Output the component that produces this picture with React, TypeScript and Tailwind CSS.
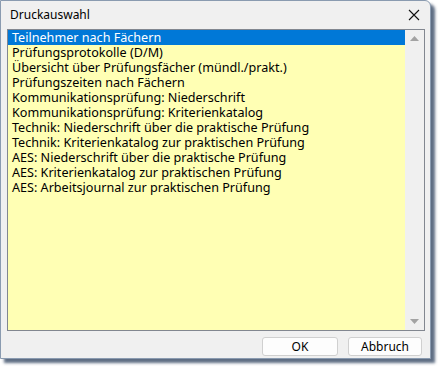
import React from "react";

const items = [
  "Teilnehmer nach Fächern",
  "Prüfungsprotokolle (D/M)",
  "Übersicht über Prüfungsfächer (mündl./prakt.)",
  "Prüfungszeiten nach Fächern",
  "Kommunikationsprüfung: Niederschrift",
  "Kommunikationsprüfung: Kriterienkatalog",
  "Technik: Niederschrift über die praktische Prüfung",
  "Technik: Kriterienkatalog zur praktischen Prüfung",
  "AES: Niederschrift über die praktische Prüfung",
  "AES: Kriterienkatalog zur praktischen Prüfung",
  "AES: Arbeitsjournal zur praktischen Prüfung",
];

export default function App() {
  return (
    <div className="w-[439px] h-[367px] bg-white" style={{ fontFamily: '"Segoe UI", "Noto Sans", sans-serif' }}>
      <div className="w-[431px] h-[359px] flex flex-col bg-[#f0f0f0] border border-[#8a9bb0] rounded-tr-[6px] shadow-[4px_4px_3px_rgba(40,60,90,0.75)]">
        {/* Title bar */}
        <div className="h-[28px] flex items-center justify-between pl-[9px] pr-[8px] text-[12px] text-black">
          <span>Druckauswahl</span>
          <svg width="12" height="12" viewBox="0 0 12 12" className="mr-[2px]">
            <path d="M1 1L11 11M11 1L1 11" stroke="#111" strokeWidth="1.1" />
          </svg>
        </div>
        {/* List */}
        <div className="ml-[6px] mr-[5px] h-[302px] flex border border-[#828790] bg-[#ffffb4]">
          <div className="flex-1 flex flex-col text-[12.6px] leading-[15px] text-black">
            {items.map((t, i) => (
              <div key={t} className={i === 0 ? "h-[15px] pl-[4px] bg-[#0078d7] text-white" : "h-[15px] pl-[4px]"}>
                {t}
              </div>
            ))}
          </div>
          <div className="w-[19px] bg-[#f0f0f0] flex flex-col justify-between items-center py-[6px]">
            <svg width="9" height="5" viewBox="0 0 9 5"><path d="M0 5L4.5 0L9 5Z" fill="#a3a3a3" /></svg>
            <svg width="9" height="5" viewBox="0 0 9 5"><path d="M0 0L4.5 5L9 0Z" fill="#a3a3a3" /></svg>
          </div>
        </div>
        {/* Buttons */}
        <div className="flex justify-end gap-[10px] pr-[8px] pt-[6px] text-[12px]">
          <button className="w-[76px] h-[19px] bg-[#fdfdfd] border border-[#d0d0d0] rounded-[3px] leading-none">OK</button>
          <button className="w-[74px] h-[19px] bg-[#fdfdfd] border border-[#d0d0d0] rounded-[3px] leading-none">Abbruch</button>
        </div>
      </div>
    </div>
  );
}
